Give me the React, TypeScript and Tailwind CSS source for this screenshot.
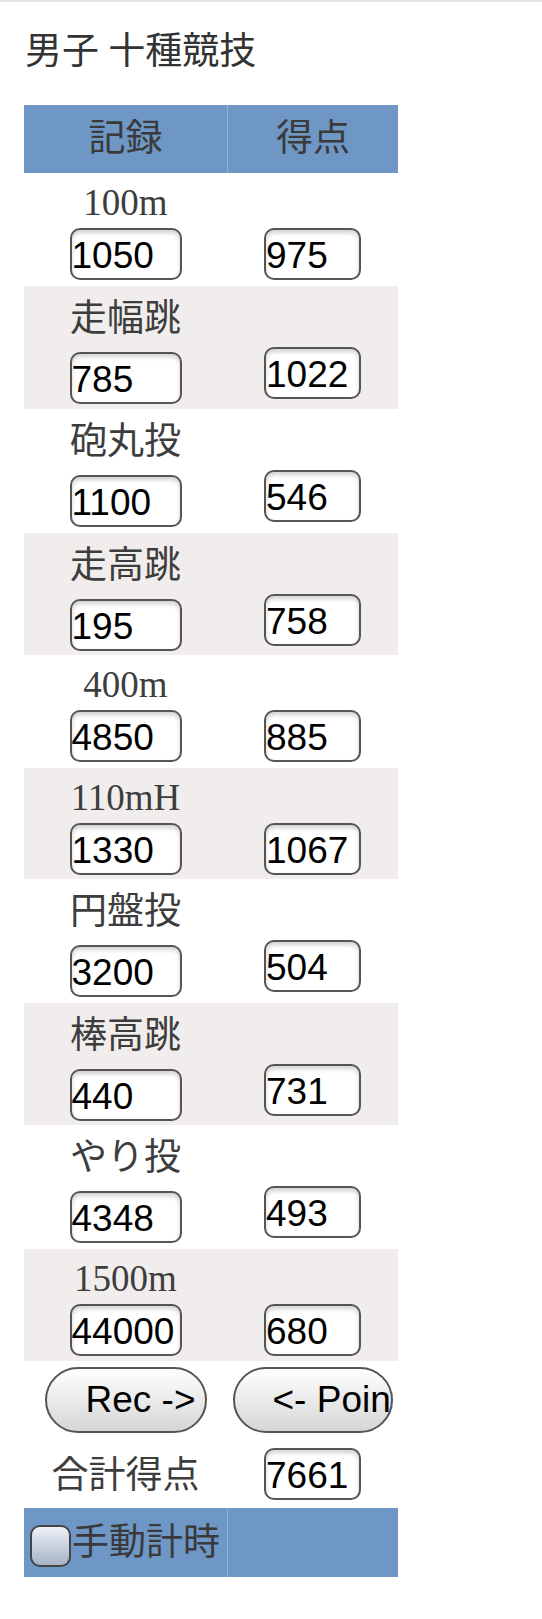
import React from "react";

type Row = { label: string; rec: string; pt: string; cjk: boolean; h: string };

const rows: Row[] = [
  { label: "100m", rec: "1050", pt: "975", cjk: false, h: "h-[113px]" },
  { label: "走幅跳", rec: "785", pt: "1022", cjk: true, h: "h-[123px]" },
  { label: "砲丸投", rec: "1100", pt: "546", cjk: true, h: "h-[124px]" },
  { label: "走高跳", rec: "195", pt: "758", cjk: true, h: "h-[122px]" },
  { label: "400m", rec: "4850", pt: "885", cjk: false, h: "h-[113px]" },
  { label: "110mH", rec: "1330", pt: "1067", cjk: false, h: "h-[111px]" },
  { label: "円盤投", rec: "3200", pt: "504", cjk: true, h: "h-[124px]" },
  { label: "棒高跳", rec: "440", pt: "731", cjk: true, h: "h-[122px]" },
  { label: "やり投", rec: "4348", pt: "493", cjk: true, h: "h-[124px]" },
  { label: "1500m", rec: "44000", pt: "680", cjk: false, h: "h-[112px]" },
];

const serif = "font-['Liberation_Serif','Noto_Sans_CJK_JP',serif]";
const inputCls =
  "h-[52px] border-2 border-[#555] rounded-[10px] bg-white px-0 pt-[4px] pb-0 text-[37px] leading-[41px] text-black font-['Liberation_Sans',Arial,sans-serif] shadow-[inset_0_3px_4px_rgba(0,0,0,0.18)] outline-none";

function Field({ value, wide }: { value: string; wide?: boolean }) {
  return (
    <input
      readOnly
      value={value}
      className={`${inputCls} ${wide ? "w-[112px]" : "w-[97px]"}`}
    />
  );
}

export default function App() {
  return (
    <div className="min-h-[1619px] w-[542px] bg-white border-t-2 border-[#e2e2e2]">
      <h1
        className={`${serif} ml-[25px] mt-[32px] h-[36px] text-[37px] leading-[36px] font-normal text-[#333]`}
      >
        男子 十種競技
      </h1>

      <div className="ml-[24px] mt-[35px] w-[374px]">
        {/* header */}
        <div className="grid h-[68px] grid-cols-[203px_171px] bg-[#6f97c6]">
          <div className={`${serif} flex items-center justify-center text-[37px] text-[#3a3a3a]`}>
            記録
          </div>
          <div
            className={`${serif} flex items-center justify-center border-l border-[#8db1dc] text-[37px] text-[#3a3a3a]`}
          >
            得点
          </div>
        </div>

        {rows.map((r, i) => (
          <div
            key={r.label}
            className={`grid grid-cols-[203px_171px] ${r.h} ${
              i % 2 === 1 ? "bg-[#f0edec]" : "bg-white"
            }`}
          >
            <div className="flex flex-col items-center">
              <div
                className={`${serif} text-[37px] leading-[37px] text-[#3d3d3d] ${
                  r.cjk ? "h-[66px] pt-[14px]" : "h-[55px] pt-[11px]"
                }`}
              >
                {r.label}
              </div>
              <Field value={r.rec} wide />
            </div>
            <div className={`flex justify-center ${r.cjk ? "pt-[61px]" : "pt-[55px]"}`}>
              <Field value={r.pt} />
            </div>
          </div>
        ))}

        {/* buttons */}
        <div className="grid h-[79px] grid-cols-[203px_171px] pt-[6px]">
          <div className="flex justify-center">
            <button className="flex h-[66px] w-[162px] items-center overflow-hidden whitespace-nowrap rounded-full border-2 border-[#555] bg-gradient-to-b from-white to-[#d6d6d6] pl-[39px] text-[37px] text-black font-['Liberation_Sans',Arial,sans-serif]">
              Rec -&gt;
            </button>
          </div>
          <div className="flex justify-center">
            <button className="flex h-[66px] w-[160px] items-center overflow-hidden whitespace-nowrap rounded-full border-2 border-[#555] bg-gradient-to-b from-white to-[#d6d6d6] pl-[38px] text-[37px] text-black font-['Liberation_Sans',Arial,sans-serif]">
              &lt;- Points
            </button>
          </div>
        </div>

        {/* total */}
        <div className="grid h-[68px] grid-cols-[203px_171px]">
          <div
            className={`${serif} flex items-center justify-center pt-[4px] text-[37px] text-[#3d3d3d]`}
          >
            合計得点
          </div>
          <div className="flex justify-center pt-[8px]">
            <Field value="7661" />
          </div>
        </div>

        {/* footer */}
        <div className="grid h-[69px] grid-cols-[203px_171px] bg-[#6f97c6]">
          <div className="flex items-center pl-[6px]">
            <span className="mt-[6px] block h-[42px] w-[41px] shrink-0 rounded-[10px] border-2 border-[#444] bg-gradient-to-b from-[#eef1f6] to-[#a6b3c6]" />
            <span className={`${serif} ml-[1px] text-[37px] leading-[37px] text-[#3a3a3a] whitespace-nowrap`}>
              手動計時
            </span>
          </div>
          <div className="border-l border-[#8db1dc]" />
        </div>
      </div>
    </div>
  );
}
